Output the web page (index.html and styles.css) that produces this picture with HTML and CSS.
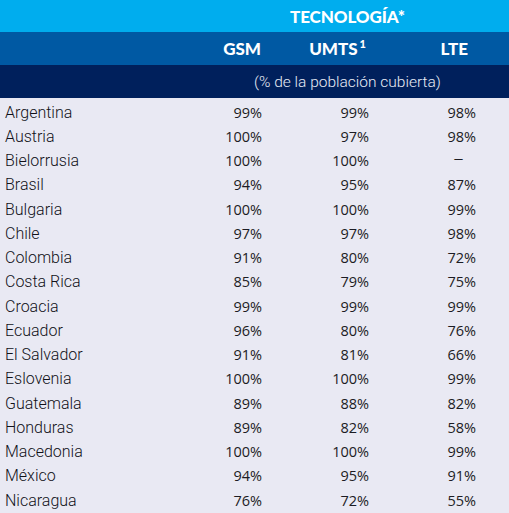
FILE: index.html
```html
<!DOCTYPE html>
<html lang="es">
<head>
<meta charset="utf-8">
<link rel="stylesheet" href="styles.css">
</head>
<body>
<div class="table">
  <div class="band band-tech"><span class="tech">TECNOLOGÍA*</span></div>
  <div class="band band-cols">
    <span></span>
    <span class="hgsm">GSM</span>
    <span class="humts">UMTS<sup>1</sup></span>
    <span class="hlte">LTE</span>
  </div>
  <div class="band band-unit"><span class="unit">(% de la población cubierta)</span></div>
  <div class="body">
    <div class="row"><span class="name">Argentina</span><span class="v">99%</span><span class="v">99%</span><span class="v">98%</span></div>
    <div class="row"><span class="name">Austria</span><span class="v">100%</span><span class="v">97%</span><span class="v">98%</span></div>
    <div class="row"><span class="name">Bielorrusia</span><span class="v">100%</span><span class="v">100%</span><span class="v dash">–</span></div>
    <div class="row"><span class="name">Brasil</span><span class="v">94%</span><span class="v">95%</span><span class="v">87%</span></div>
    <div class="row"><span class="name">Bulgaria</span><span class="v">100%</span><span class="v">100%</span><span class="v">99%</span></div>
    <div class="row"><span class="name">Chile</span><span class="v">97%</span><span class="v">97%</span><span class="v">98%</span></div>
    <div class="row"><span class="name">Colombia</span><span class="v">91%</span><span class="v">80%</span><span class="v">72%</span></div>
    <div class="row"><span class="name">Costa Rica</span><span class="v">85%</span><span class="v">79%</span><span class="v">75%</span></div>
    <div class="row"><span class="name">Croacia</span><span class="v">99%</span><span class="v">99%</span><span class="v">99%</span></div>
    <div class="row"><span class="name">Ecuador</span><span class="v">96%</span><span class="v">80%</span><span class="v">76%</span></div>
    <div class="row"><span class="name">El Salvador</span><span class="v">91%</span><span class="v">81%</span><span class="v">66%</span></div>
    <div class="row"><span class="name">Eslovenia</span><span class="v">100%</span><span class="v">100%</span><span class="v">99%</span></div>
    <div class="row"><span class="name">Guatemala</span><span class="v">89%</span><span class="v">88%</span><span class="v">82%</span></div>
    <div class="row"><span class="name">Honduras</span><span class="v">89%</span><span class="v">82%</span><span class="v">58%</span></div>
    <div class="row"><span class="name">Macedonia</span><span class="v">100%</span><span class="v">100%</span><span class="v">99%</span></div>
    <div class="row"><span class="name">México</span><span class="v">94%</span><span class="v">95%</span><span class="v">91%</span></div>
    <div class="row"><span class="name">Nicaragua</span><span class="v">76%</span><span class="v">72%</span><span class="v">55%</span></div>
  </div>
</div>
</body>
</html>
```
FILE: styles.css
```css
html, body {
  margin: 0;
  padding: 0;
  background: #e9e9f3;
}
.table {
  width: 509px;
  overflow: hidden;
}
.band {
  display: flex;
  align-items: center;
  color: #ffffff;
}
.band-tech {
  height: 32px;
  background: #00adee;
  padding-left: 290px;
}
.tech {
  font-family: "Lato", sans-serif;
  font-weight: 900;
  font-size: 17px;
  letter-spacing: -0.1px;
}
.band-cols {
  height: 33px;
  background: #0059a3;
  display: grid;
  grid-template-columns: 155px 107px 107px 99px;
  font-family: "Lato", sans-serif;
  font-weight: 900;
  font-size: 17px;
}
.band-cols span {
  text-align: right;
}
.hgsm { padding-right: 1px; }
.humts { padding-right: 3px; }
.humts sup {
  font-size: 11px;
  vertical-align: 7px;
  line-height: 0;
  margin-left: 2px;
}
.band-unit {
  height: 33px;
  background: #00205c;
  padding-left: 254px;
}
.unit {
  font-family: "Roboto", sans-serif;
  font-weight: 300;
  font-size: 15.5px;
  color: #e8ecf6;
}
.body {
  display: flex;
  flex-direction: column;
  padding-top: 2px;
}
.row {
  height: 24.25px;
  display: grid;
  grid-template-columns: 155px 107px 107px 107px;
  align-items: center;
  color: #1c1c24;
}
.name {
  padding-left: 5px;
  font-family: "Roboto", sans-serif;
  font-size: 16px;
  font-weight: 300;
  color: #111118;
}
.v {
  text-align: right;
  font-family: "Open Sans", sans-serif;
  font-size: 14.5px;
}
.v.dash {
  padding-right: 12px;
  font-family: "Roboto", sans-serif;
  font-weight: 300;
  font-size: 17px;
  line-height: 1;
}
```
